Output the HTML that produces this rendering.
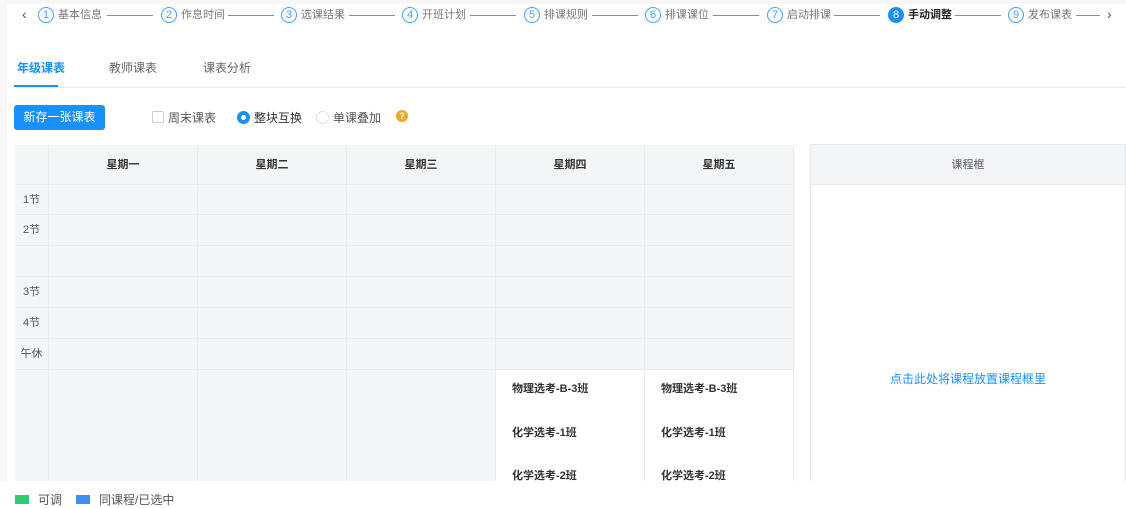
<!DOCTYPE html>
<html><head><meta charset="utf-8"><style>
*{margin:0;padding:0;box-sizing:border-box}
body{width:1126px;height:507px;overflow:hidden;background:#fff;font-family:"Liberation Sans","Noto Sans CJK SC",sans-serif;font-size:12px;color:#606266;position:relative}
.a{position:absolute}
.c{position:absolute;top:7px;width:16px;height:16px;border:1px solid #409eff;border-radius:50%;color:#409eff;font-size:11px;line-height:14px;text-align:center}
.t{position:absolute;top:8px;font-size:11px;color:#777;line-height:14px}
.l{position:absolute;top:15px;height:1px;background:#409eff}
.cell{position:absolute;background:#f4f5f7;border-right:1px solid #ebebeb;border-bottom:1px solid #ebebeb}
.hd{font-weight:bold;color:#333;text-align:center;line-height:40px;font-size:11px}
.rl{text-align:center;color:#555;line-height:30px;font-size:11px}
.cls{position:absolute;font-weight:bold;color:#333;font-size:11px}
</style></head><body>
<div class="a" style="left:0;top:0;width:1126px;height:4px;background:#f7f7f7"></div>
<div class="a" style="left:0;top:0;width:7px;height:507px;background:#f7f7f7"></div>
<div class="a" style="left:22px;top:6px;font-size:14px;color:#555">‹</div>
<div class="a" style="left:1107px;top:6px;font-size:14px;color:#555">›</div>
<div class="c" style="left:38px">1</div><div class="t" style="left:58px">基本信息</div><div class="l" style="left:107px;width:46px"></div>
<div class="c" style="left:161px">2</div><div class="t" style="left:181px">作息时间</div><div class="l" style="left:228px;width:46px"></div>
<div class="c" style="left:281px">3</div><div class="t" style="left:301px">选课结果</div><div class="l" style="left:349px;width:46px"></div>
<div class="c" style="left:402px">4</div><div class="t" style="left:422px">开班计划</div><div class="l" style="left:470px;width:46px"></div>
<div class="c" style="left:524px">5</div><div class="t" style="left:544px">排课规则</div><div class="l" style="left:592px;width:46px"></div>
<div class="c" style="left:645px">6</div><div class="t" style="left:665px">排课课位</div><div class="l" style="left:713px;width:46px"></div>
<div class="c" style="left:767px">7</div><div class="t" style="left:787px">启动排课</div><div class="l" style="left:834px;width:46px"></div>
<div class="c" style="left:888px;background:#1890ff;border-color:#1890ff;color:#fff">8</div><div class="t" style="left:908px;color:#222;font-weight:bold">手动调整</div><div class="l" style="left:955px;width:46px"></div>
<div class="c" style="left:1008px">9</div><div class="t" style="left:1028px">发布课表</div><div class="l" style="left:1076px;width:24px"></div>

<div class="a" style="left:17px;top:59px;color:#1890ff;font-weight:bold">年级课表</div>
<div class="a" style="left:109px;top:59px;color:#666">教师课表</div>
<div class="a" style="left:203px;top:59px;color:#666">课表分析</div>
<div class="a" style="left:14px;top:85px;width:44px;height:2px;background:#1890ff"></div>
<div class="a" style="left:14px;top:87px;width:1112px;height:1px;background:#ebebeb"></div>

<div class="a" style="left:14px;top:105px;width:91px;height:25px;background:#1890ff;border-radius:3px;color:#fff;text-align:center;line-height:25px">新存一张课表</div>
<div class="a" style="left:152px;top:111px;width:12px;height:12px;border:1px solid #ccc;border-radius:2px"></div>
<div class="a" style="left:168px;top:109px;color:#555">周末课表</div>
<div class="a" style="left:237px;top:111px;width:13px;height:13px;border:4px solid #1890ff;border-radius:50%;background:#fff"></div>
<div class="a" style="left:254px;top:109px;color:#333">整块互换</div>
<div class="a" style="left:316px;top:111px;width:13px;height:13px;border:1px solid #ddd;border-radius:50%"></div>
<div class="a" style="left:333px;top:109px;color:#555">单课叠加</div>
<div class="a" style="left:396px;top:110px;width:12px;height:12px;background:#f5a623;border-radius:50%;color:#fff;font-size:9px;text-align:center;line-height:12px;font-weight:bold">?</div>

<div id="grid"></div>
<script>
var g=document.getElementById('grid'),h='';
var xs=[15,49,198,347,496,645,794];
var ys=[145,185,215,246,277,308,339,370,507];
var labels=['','1节','2节','','3节','4节','午休',''];
var days=['星期一','星期二','星期三','星期四','星期五'];
for(var r=0;r<8;r++)for(var c=0;c<6;c++){
 var w=xs[c+1]-xs[c],ht=ys[r+1]-ys[r];
 var bg=(r==7&&c>=4)?'#fff':'#f4f5f7';
 var txt='',cls='cell';
 if(r==0&&c>0){txt=days[c-1];cls+=' hd'}
 else if(c==0){txt=labels[r];cls+=' rl'}
 h+='<div class="'+cls+'" style="left:'+xs[c]+'px;top:'+ys[r]+'px;width:'+w+'px;height:'+ht+'px;background:'+bg+'">'+txt+'</div>';
}
g.innerHTML=h;
</script>
<div class="cls" style="left:512px;top:380px">物理选考-B-3班</div>
<div class="cls" style="left:661px;top:380px">物理选考-B-3班</div>
<div class="cls" style="left:512px;top:424px">化学选考-1班</div>
<div class="cls" style="left:661px;top:424px">化学选考-1班</div>
<div class="cls" style="left:512px;top:467px">化学选考-2班</div>
<div class="cls" style="left:661px;top:467px">化学选考-2班</div>

<div class="a" style="left:810px;top:144px;width:316px;height:363px;border:1px solid #e8e8e8;background:#fff"></div>
<div class="a hd" style="left:811px;top:145px;width:314px;height:40px;background:#f4f5f7;border-bottom:1px solid #e8e8e8;font-weight:normal;color:#555">课程框</div>
<div class="a" style="left:811px;top:370px;width:314px;text-align:center;color:#1890ff">点击此处将课程放置课程框里</div>

<div class="a" style="left:0;top:481px;width:1126px;height:26px;background:#fff"></div>
<div class="a" style="left:15px;top:495px;width:14px;height:9px;background:#2ecc71"></div>
<div class="a" style="left:38px;top:491px;color:#555">可调</div>
<div class="a" style="left:76px;top:495px;width:14px;height:9px;background:#3b8ff7"></div>
<div class="a" style="left:99px;top:491px;color:#555">同课程/已选中</div>
</body></html>
